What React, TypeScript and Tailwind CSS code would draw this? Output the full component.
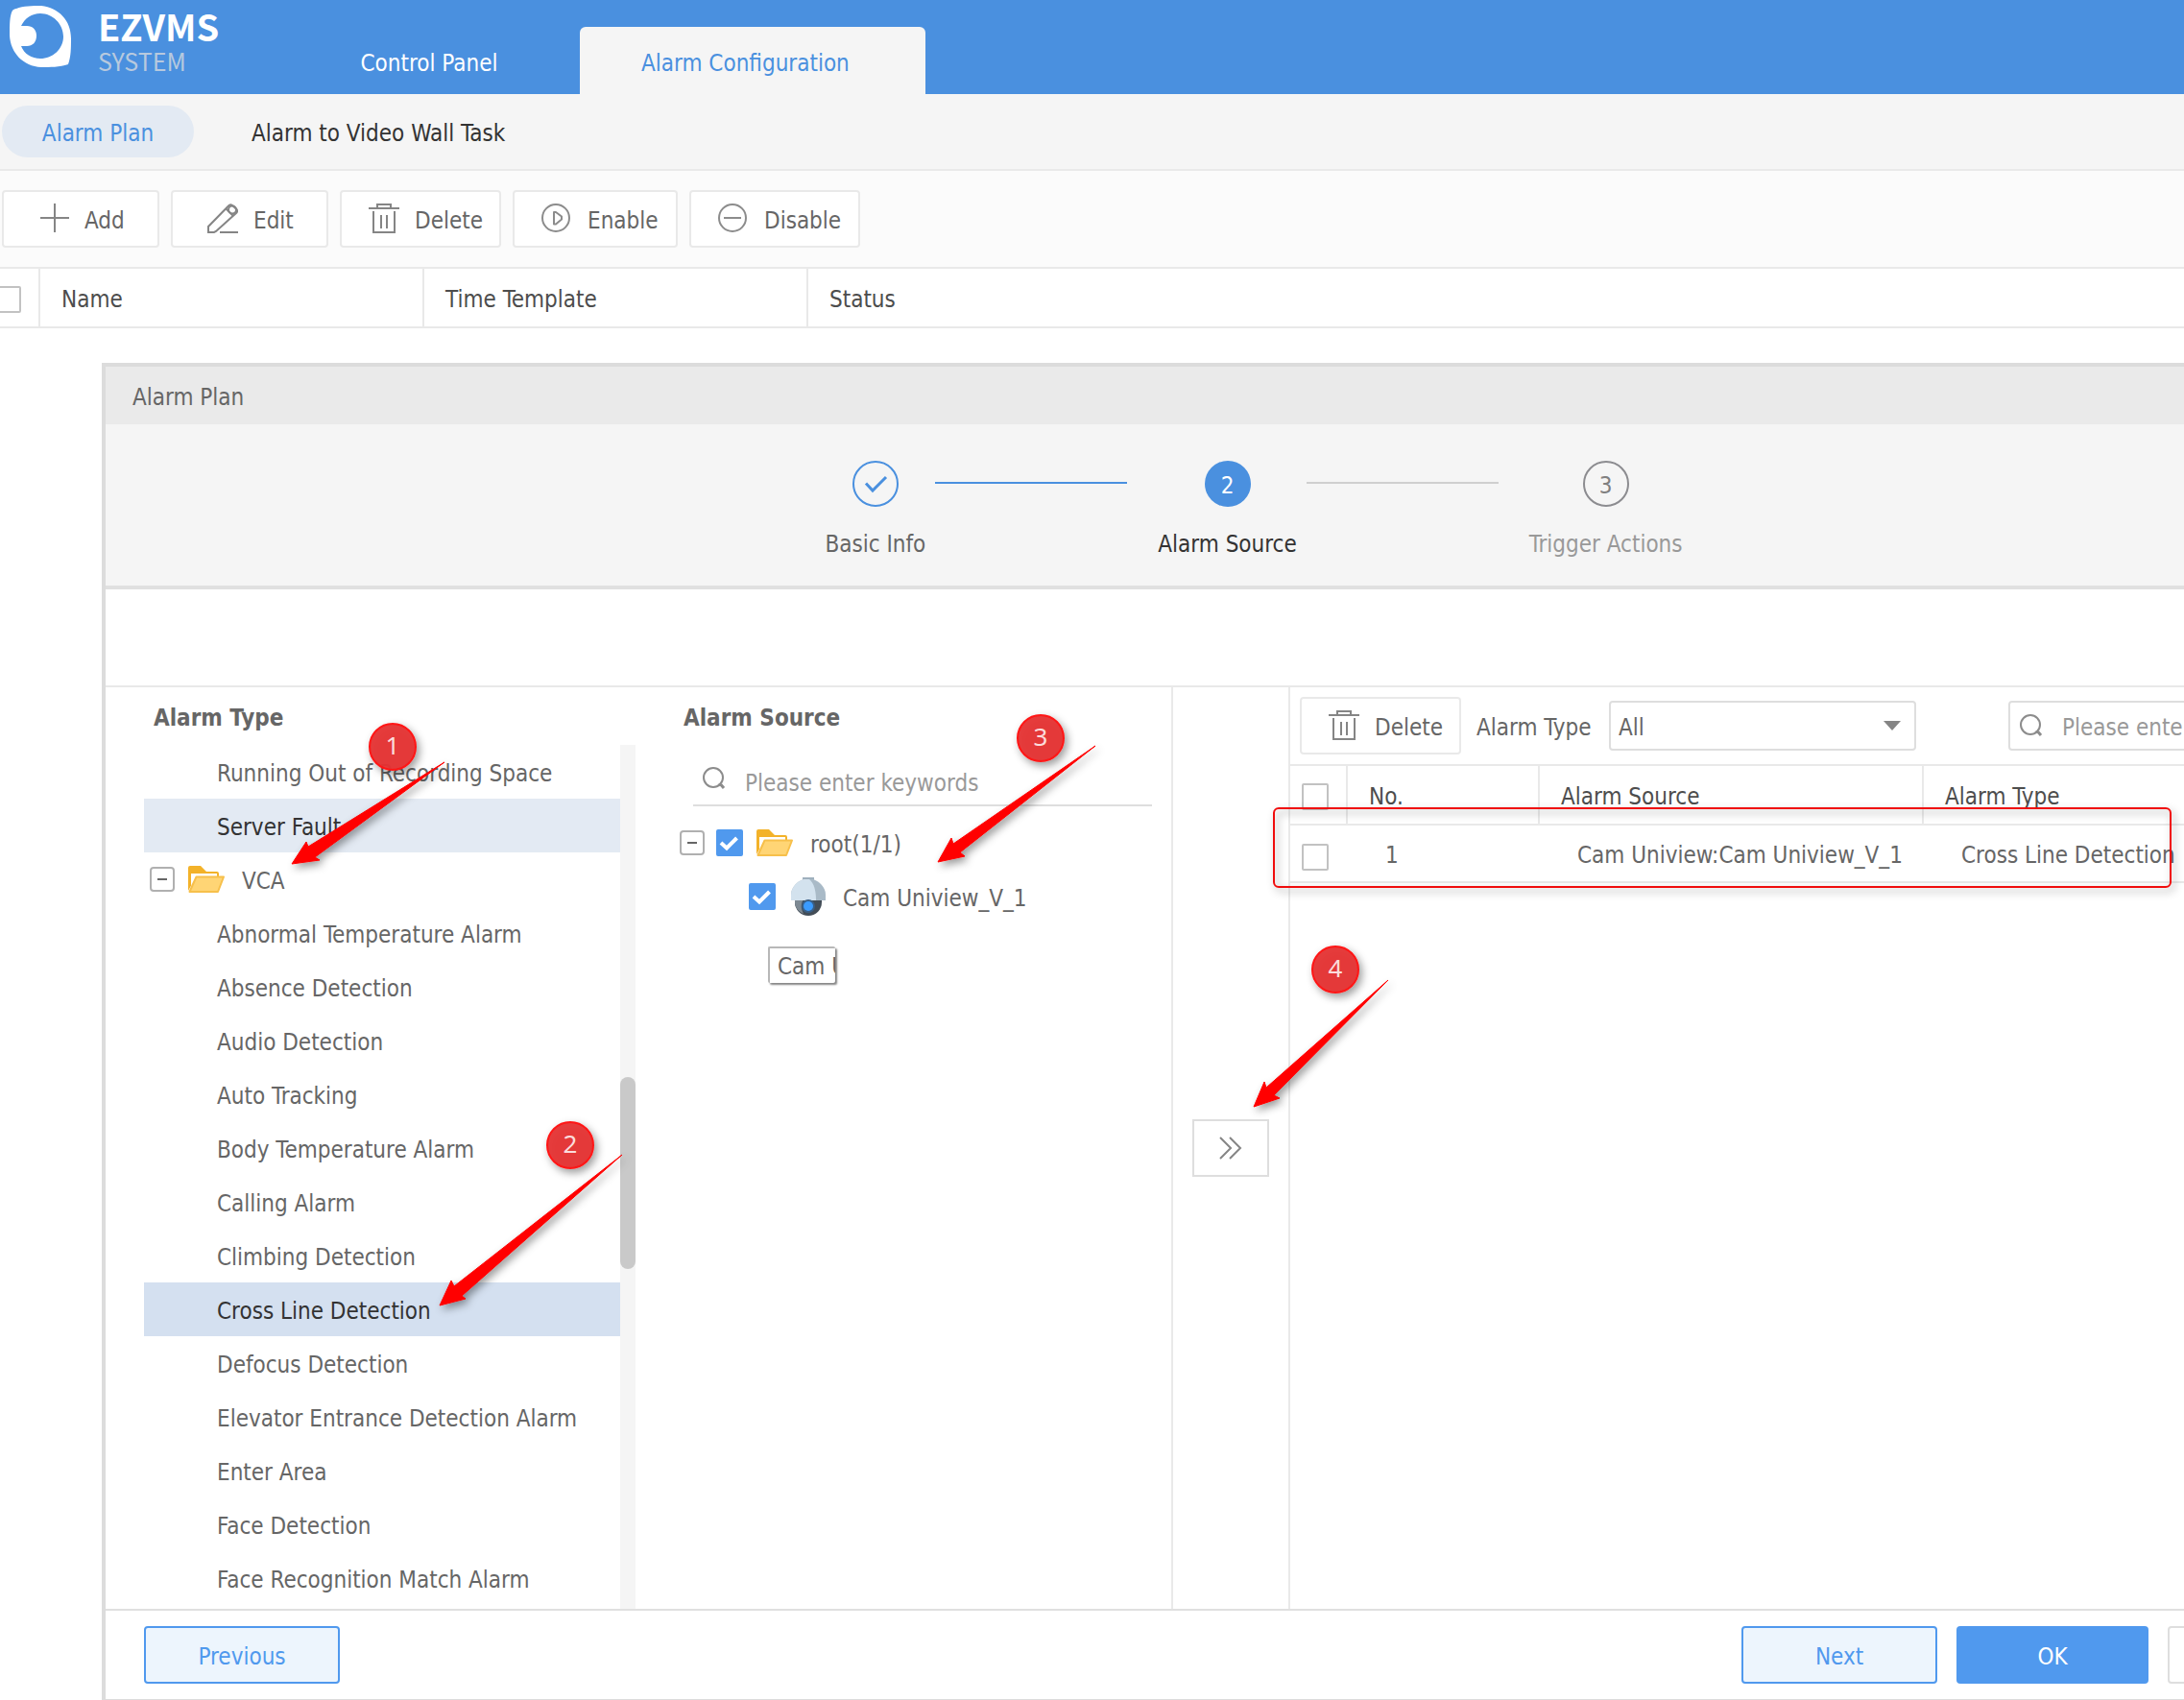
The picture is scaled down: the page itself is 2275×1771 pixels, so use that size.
import type { InputHTMLAttributes, ReactNode } from "react";
import clsx from "clsx";

/* ---------- icons ---------- */

const PlusIcon = () => (
  <svg className="size-8 shrink-0" viewBox="0 0 32 32" fill="none" stroke="#858585" strokeWidth="2">
    <path d="M17 0v30M2 15h30" />
  </svg>
);

const EditIcon = () => (
  <svg className="size-8 shrink-0" viewBox="0 0 32 32" fill="none" stroke="#858585" strokeWidth="2">
    <path d="M1 30v-6L22 2.500a3 3 0 0 1 4 -.500l4.500 4a3 3 0 0 1 0 3.500L9 29l-2 1Z" />
    <circle cx="26" cy="6.500" r="4" />
    <path d="M19 5l8 8M13 30h19" />
  </svg>
);

const TrashIcon = () => (
  <svg className="size-8 shrink-0" viewBox="0 0 32 32" fill="none" stroke="#858585" strokeWidth="2">
    <path d="M0 5h32M9 5V1h14v4M5 8v22h22V8M13 12v14M19 12v14" />
  </svg>
);

const PlayIcon = () => (
  <svg className="size-8 shrink-0" viewBox="0 0 32 32" fill="none" stroke="#8c8c8c" strokeWidth="2">
    <circle cx="15" cy="15" r="14" />
    <path d="M13 9v12.500h2l6 -5v-3l-6 -4.500Z" strokeLinejoin="round" />
  </svg>
);

const DisableIcon = () => (
  <svg className="size-8 shrink-0" viewBox="0 0 32 32" fill="none" stroke="#8c8c8c" strokeWidth="2">
    <circle cx="15" cy="15" r="14" />
    <path d="M6 15h18" />
  </svg>
);

const SearchIcon = () => (
  <svg className="size-6 shrink-0" viewBox="0 0 24 24" fill="none" stroke="#8c8c8c" strokeWidth="2">
    <circle cx="11" cy="11" r="10" />
    <path d="M17 19l2.500 -1.500M19 18.500l3 3.500" strokeWidth="3" />
  </svg>
);

const FolderIcon = () => (
  <svg className="h-7 w-[38px] shrink-0" viewBox="0 0 38 28">
    <path d="M0 2a2 2 0 0 1 2-2h11l6 6h11a2 2 0 0 1 2 2v4H8L0 26Z" fill="#f3b229" />
    <path d="M3 8h27v4H8L3 21Z" fill="#fff" />
    <path d="M8.500 11.500h28.500L31 27H1.500Z" fill="#ffd575" stroke="#f7c04b" strokeWidth="2" strokeLinejoin="round" />
  </svg>
);

const CameraIcon = () => (
  <svg className="h-10 w-9 shrink-0" viewBox="0 0 36 40">
    <path d="M12 0h12v5H12Z" fill="#9fb0bd" />
    <path d="M4 23h28v3a14 14 0 0 1-28 0Z" fill="#434d57" />
    <path d="M4 23h9c-3 5-3 9 0 15-5-2-9-7-9-12Z" fill="#7d8993" />
    <path d="M0 24v-6C0 10 7 4 13 2h10c6 2 13 8 13 16v6Z" fill="#a9bac7" />
    <path d="M0 24v-6C0 10 7 4 13 2h6c5 4 7 12 7 22Z" fill="#d3e2ee" />
    <circle cx="18" cy="30" r="7" fill="#3a5f86" />
    <circle cx="18" cy="30" r="5" fill="#3b9bff" />
  </svg>
);

const LogoIcon = () => (
  <svg className="mt-1.5 h-16 w-16 shrink-0" viewBox="0 0 64 64">
    <path
      fillRule="evenodd"
      fill="#fff"
      d="M7 3C14 0 24 0 33 0C51 2 64 15 64 34C64 44 64 53 61 61C52 64 42 64 33 64C14 63 1 49 0 31C0 20 0 10 3 5C4 4 5 3 7 3ZM12 21H18C24 21 28 25 28 31C28 38 24 42 18 42H12C15 50 23 55 32 55C45 55 56 45 56 32C56 19 45 8 32 8C23 8 16 13 12 21Z"
    />
  </svg>
);

/* ---------- small controls ---------- */

function Checkbox(props: InputHTMLAttributes<HTMLInputElement>) {
  return (
    <span className="grid size-7 shrink-0">
      <input
        type="checkbox"
        className="peer col-start-1 row-start-1 size-7 appearance-none rounded-xs border-2 border-[#c2c2c2] bg-white checked:border-[#5099ee] checked:bg-[#5099ee]"
        {...props}
      />
      <svg
        className="pointer-events-none invisible col-start-1 row-start-1 size-7 peer-checked:visible"
        viewBox="0 0 28 28"
        fill="none"
        stroke="#fff"
        strokeWidth="4"
      >
        <path d="M5 14l6 5.500L21.500 9" />
      </svg>
    </span>
  );
}

function Collapse({ label }: { label: string }) {
  return (
    <button
      aria-label={label}
      className="flex size-[26px] shrink-0 items-center justify-center rounded-sm border-2 border-[#b0b0b0]"
    >
      <span className="h-0.5 w-2.5 bg-[#666]" />
    </button>
  );
}

function ToolButton({ icon, children, className }: { icon: ReactNode; children: ReactNode; className: string }) {
  return (
    <button
      className={clsx(
        "flex h-[60px] shrink-0 items-center gap-4 rounded-sm border-2 border-[#e9e9e9] bg-white",
        className,
      )}
    >
      {icon}
      <span className="pt-1">{children}</span>
    </button>
  );
}

/* ---------- data ---------- */

const toolbar = [
  { title: "Add", icon: <PlusIcon />, className: "w-[164px] pl-9" },
  { title: "Edit", icon: <EditIcon />, className: "w-[164px] pl-9" },
  { title: "Delete", icon: <TrashIcon />, className: "w-[168px] pl-7" },
  { title: "Enable", icon: <PlayIcon />, className: "w-[172px] pl-7" },
  { title: "Disable", icon: <DisableIcon />, className: "w-[178px] pl-7" },
];

const vcaTypes = [
  "Abnormal Temperature Alarm",
  "Absence Detection",
  "Audio Detection",
  "Auto Tracking",
  "Body Temperature Alarm",
  "Calling Alarm",
  "Climbing Detection",
  "Cross Line Detection",
  "Defocus Detection",
  "Elevator Entrance Detection Alarm",
  "Enter Area",
  "Face Detection",
  "Face Recognition Match Alarm",
];

const badges = [
  { n: 1, x: 409, y: 778 },
  { n: 2, x: 594, y: 1193 },
  { n: 3, x: 1084, y: 769 },
  { n: 4, x: 1391, y: 1010 },
];

const arrows = [
  "304,900 319,877 321,882 463,794 328,893 333,896",
  "458,1360 470,1334 473,1340 648,1203 481,1350 485,1353",
  "977,898 991,873 993,879 1141,777 1000,888 1005,892",
  "1306,1153 1317,1127 1319,1133 1446,1021 1327,1141 1333,1144",
];

/* ---------- sections ---------- */

function Header() {
  return (
    <header className="flex h-[98px] items-end bg-[#4a90df]">
      <div className="flex w-[290px] shrink-0 gap-7 self-stretch pl-2.5">
        <LogoIcon />
        <div className="font-['Noto_Sans_CJK_SC','Noto_Sans',sans-serif]">
          <div className="text-[38px] leading-[54px] font-bold text-white">EZVMS</div>
          <div className="text-[25px] leading-[18px] text-[#b7c9de]">SYSTEM</div>
        </div>
      </div>
      <nav className="flex leading-[70px]">
        <a href="#control" className="h-[70px] w-[314px] pt-[3px] text-center text-white">
          Control Panel
        </a>
        <a href="#alarm" className="h-[70px] w-[360px] rounded-t-md bg-[#f5f5f5] pt-[3px] pl-16 text-[#4a90df]">
          Alarm Configuration
        </a>
      </nav>
    </header>
  );
}

function PlanTable() {
  return (
    <table className="w-full table-fixed border-y-2 border-[#e9e9e9] bg-white text-left text-[#4d4d4d]">
      <thead>
        <tr className="h-[62px]">
          <th className="w-[41px] border-r-2 border-[#e9e9e9]">
            <div className="-ml-1.5 pt-1">
              <Checkbox aria-label="Select all plans" />
            </div>
          </th>
          <th className="w-[400px] border-r-2 border-[#e9e9e9] pt-1 pl-[22px] font-normal">Name</th>
          <th className="w-[400px] border-r-2 border-[#e9e9e9] pt-1 pl-[22px] font-normal">Time Template</th>
          <th className="pt-1 pl-[22px] font-normal">Status</th>
        </tr>
      </thead>
    </table>
  );
}

function Step({ circle, label, className }: { circle: ReactNode; label: string; className: string }) {
  return (
    <li className={clsx("flex flex-col items-center gap-5", className)}>
      {circle}
      <span className="leading-[38px]">{label}</span>
    </li>
  );
}

function Stepper() {
  return (
    <ol className="flex h-[172px] items-start justify-center border-b-4 border-[#e0e0e0] bg-[#f5f5f5] pt-[38px]">
      <Step
        className="text-[#666]"
        label="Basic Info"
        circle={
          <svg className="size-12" viewBox="0 0 48 48" fill="none" stroke="#4a90df">
            <circle cx="24" cy="24" r="23" strokeWidth="2" />
            <path d="M14 23.500l7 7.500L35 17" strokeWidth="3" />
          </svg>
        }
      />
      <li aria-hidden className="mt-[22px] mr-8 ml-2.5 h-0.5 w-[200px] bg-[#4a90df]" />
      <Step
        className="text-[#333]"
        label="Alarm Source"
        circle={
          <span className="flex size-12 items-center justify-center rounded-full bg-[#4a90df] pt-1 text-white">
            2
          </span>
        }
      />
      <li aria-hidden className="mt-[22px] mr-8 ml-2.5 h-0.5 w-[200px] bg-[#cfcfcf]" />
      <Step
        className="text-[#999]"
        label="Trigger Actions"
        circle={
          <span className="flex size-12 items-center justify-center rounded-full border-2 border-[#8c8c90] pt-1 text-[#808080]">
            3
          </span>
        }
      />
    </ol>
  );
}

function AlarmTypePanel() {
  return (
    <section className="flex w-[552px] shrink-0 flex-col pl-10">
      <h2 className="h-[60px] pt-1 pl-2.5 leading-[56px] font-bold">Alarm Type</h2>
      <div className="flex flex-1">
        <ul className="flex-1 leading-[60px]">
          <li className="h-14 pl-[76px]">Running Out of Recording Space</li>
          <li className="h-14 bg-[#e3eaf3] pl-[76px] text-[#333]">Server Fault</li>
          <li>
            <div className="flex h-14 items-center gap-[14px] pl-1.5">
              <Collapse label="Collapse VCA" />
              <FolderIcon />
              <span className="pt-1 pl-1">VCA</span>
            </div>
            <ul>
              {vcaTypes.map((type) => (
                <li
                  key={type}
                  className={clsx(
                    "h-14 pl-[76px] whitespace-nowrap",
                    type === "Cross Line Detection" && "bg-[#d4e0f0] text-[#333]",
                  )}
                >
                  {type}
                </li>
              ))}
            </ul>
          </li>
        </ul>
        <div className="w-4 bg-[#f5f5f5] pt-[346px]">
          <div className="h-[200px] rounded-full bg-[#c9c9c9]" />
        </div>
      </div>
    </section>
  );
}

function AlarmSourcePanel() {
  return (
    <section className="w-[560px] shrink-0 border-r-2 border-[#e9e9e9] pr-5 pl-[46px]">
      <h2 className="h-[60px] pt-1 pl-1 leading-[56px] font-bold">Alarm Source</h2>
      <label className="ml-[14px] flex h-16 items-center gap-5 border-b-2 border-[#dedede] pt-2 pl-2.5">
        <SearchIcon />
        <input
          aria-label="Search alarm source"
          placeholder="Please enter keywords"
          className="h-12 min-w-0 flex-1 pt-2.5 outline-none placeholder:text-[#999]"
        />
      </label>
      <ul className="relative pt-2.5">
        <li className="flex h-14 items-center gap-3">
          <Collapse label="Collapse root" />
          <Checkbox id="root" defaultChecked />
          <span className="pl-0.5">
            <FolderIcon />
          </span>
          <label htmlFor="root" className="pt-1 pl-1.5">
            root(1/1)
          </label>
        </li>
        <li className="flex h-14 items-center gap-4 pl-[72px]">
          <Checkbox id="cam" defaultChecked />
          <CameraIcon />
          <label htmlFor="cam" className="pt-1 pl-0.5">
            Cam Uniview_V_1
          </label>
        </li>
        <li
          role="tooltip"
          className="absolute top-[146px] left-[92px] h-[38px] w-[70px] overflow-hidden rounded-xs border-t-2 border-l-2 border-[#b8b8b8] bg-white pl-2 leading-[38px] whitespace-nowrap shadow-[2px_2px_2px_#858585]"
        >
          Cam Uniview_V_1
        </li>
      </ul>
    </section>
  );
}

function SelectedPanel() {
  return (
    <section className="min-w-0 flex-1">
      <div className="flex h-20 items-center pl-2.5">
        <ToolButton icon={<TrashIcon />} className="w-[168px] pl-7">
          Delete
        </ToolButton>
        <label htmlFor="type-filter" className="w-[154px] shrink-0 pt-1 pl-4 whitespace-nowrap">
          Alarm Type
        </label>
        <div className="relative w-[320px] shrink-0">
          <select
            id="type-filter"
            className="h-[52px] w-full appearance-none rounded-sm border-2 border-[#dedede] bg-white pt-1 pl-2 outline-none"
          >
            <option>All</option>
          </select>
          <svg className="pointer-events-none absolute top-5 right-4 h-3 w-[18px]" viewBox="0 0 18 12">
            <path d="M0 1h18L9 11Z" fill="#858585" />
          </svg>
        </div>
        <label className="ml-24 flex h-[52px] w-[350px] shrink-0 items-center gap-5 rounded-sm border-2 border-[#dedede] bg-white pl-2.5">
          <SearchIcon />
          <input
            aria-label="Search selected sources"
            placeholder="Please enter keywords"
            className="h-11 min-w-0 flex-1 pt-1 outline-none placeholder:text-[#999]"
          />
        </label>
      </div>
      <table className="w-full table-fixed text-left">
        <thead className="text-[#4d4d4d]">
          <tr className="h-[62px] border-y-2 border-[#e9e9e9]">
            <th className="w-[59px] border-r-2 border-[#e9e9e9] pt-1 pl-3">
              <Checkbox aria-label="Select all" />
            </th>
            <th className="w-[200px] border-r-2 border-[#e9e9e9] pt-1 pl-[22px] font-normal">No.</th>
            <th className="w-[400px] border-r-2 border-[#e9e9e9] pt-1 pl-[22px] font-normal">Alarm Source</th>
            <th className="pt-1 pl-[22px] font-normal">Alarm Type</th>
          </tr>
        </thead>
        <tbody>
          <tr className="h-[60px] border-b-2 border-[#e9e9e9]">
            <td className="pt-2 pl-3">
              <Checkbox aria-label="Select row 1" />
            </td>
            <td className="pt-1 pl-10">1</td>
            <td className="pt-1 pl-10 whitespace-nowrap">Cam Uniview:Cam Uniview_V_1</td>
            <td className="pt-1 pl-10">Cross Line Detection</td>
          </tr>
        </tbody>
      </table>
    </section>
  );
}

function Dialog() {
  return (
    <main
      role="dialog"
      aria-label="Alarm Plan"
      className="mt-9 -mr-[227px] ml-[106px] flex flex-1 flex-col border-t-4 border-b border-l-4 border-[#dcdcdc] bg-white"
    >
      <h1 className="h-[60px] bg-[#eaeaea] pl-7 leading-[64px]">Alarm Plan</h1>
      <Stepper />
      <div className="mt-[100px] flex flex-1 border-t-2 border-[#e9e9e9]">
        <AlarmTypePanel />
        <AlarmSourcePanel />
        <div className="flex w-[122px] shrink-0 items-center justify-center border-r-2 border-[#e9e9e9]">
          <button
            aria-label="Add to list"
            className="flex h-[60px] w-20 items-center justify-center border-2 border-[#dedede] bg-white"
          >
            <svg className="size-6" viewBox="0 0 24 24" fill="none" stroke="#858585" strokeWidth="2">
              <path d="M1 1l11 11L1 23M11 1l11 11L11 23" />
            </svg>
          </button>
        </div>
        <SelectedPanel />
      </div>
      <footer className="flex h-[94px] items-center gap-5 border-t-2 border-[#e0e0e0] px-10">
        <button className="mr-auto h-[60px] w-[204px] rounded-sm border-2 border-[#5099ee] bg-[#edf5fd] pt-1 text-[#5099ee]">
          Previous
        </button>
        <button className="h-[60px] w-[204px] rounded-sm border-2 border-[#5099ee] bg-[#edf5fd] pt-1 text-[#5099ee]">
          Next
        </button>
        <button className="h-[60px] w-[200px] rounded-sm bg-[#5099ee] pt-1 text-white">OK</button>
        <button className="h-[60px] w-[204px] rounded-sm border-2 border-[#dedede] bg-white pt-1">Cancel</button>
      </footer>
    </main>
  );
}

// numbered markers and arrows drawn over the page
function Annotations() {
  return (
    <svg className="pointer-events-none absolute inset-0 h-full w-full">
      <defs>
        <filter id="shadow" x="-20%" y="-20%" width="150%" height="150%">
          <feDropShadow dx="3" dy="4" stdDeviation="4" floodColor="#000" floodOpacity="0.4" />
        </filter>
      </defs>
      <rect
        x="1327"
        y="842"
        width="934"
        height="82"
        rx="5"
        fill="none"
        stroke="#f00d0d"
        strokeWidth="2"
        filter="url(#shadow)"
      />
      {badges.map(({ n, x, y }) => (
        <g key={n}>
          <circle
            cx={x}
            cy={y}
            r="24"
            fill="#e53333"
            fillOpacity="0.95"
            stroke="#ff1414"
            strokeWidth="2"
            filter="url(#shadow)"
          />
          <text x={x} y={y + 8} textAnchor="middle" fill="#fbdcdc" className="font-['Noto_Sans',sans-serif] text-[26px]">
            {n}
          </text>
        </g>
      ))}
      {arrows.map((points) => (
        <polygon key={points} points={points} fill="#f00" stroke="#f00" strokeLinejoin="round" filter="url(#shadow)" />
      ))}
    </svg>
  );
}

export default function App() {
  return (
    <div className="relative flex min-h-screen flex-col overflow-hidden bg-white font-['DejaVu_Sans_Condensed','Noto_Sans',sans-serif] text-[24px] leading-8 text-[#666]">
      <Header />
      <nav className="flex h-20 items-center border-b-2 border-[#e9e9e9] bg-[#f5f5f5] pl-0.5">
        <a href="#plan" className="h-[54px] w-[200px] rounded-full bg-[#e3eaf3] text-center leading-[58px] text-[#4a90df]">
          Alarm Plan
        </a>
        <a href="#wall" className="pt-1 pl-[60px] text-[#333]">
          Alarm to Video Wall Task
        </a>
      </nav>
      <div className="flex h-[100px] items-center gap-3 bg-[#fbfbfb] pl-0.5">
        {toolbar.map(({ title, icon, className }) => (
          <ToolButton key={title} icon={icon} className={className}>
            {title}
          </ToolButton>
        ))}
      </div>
      <PlanTable />
      <Dialog />
      <Annotations />
    </div>
  );
}
